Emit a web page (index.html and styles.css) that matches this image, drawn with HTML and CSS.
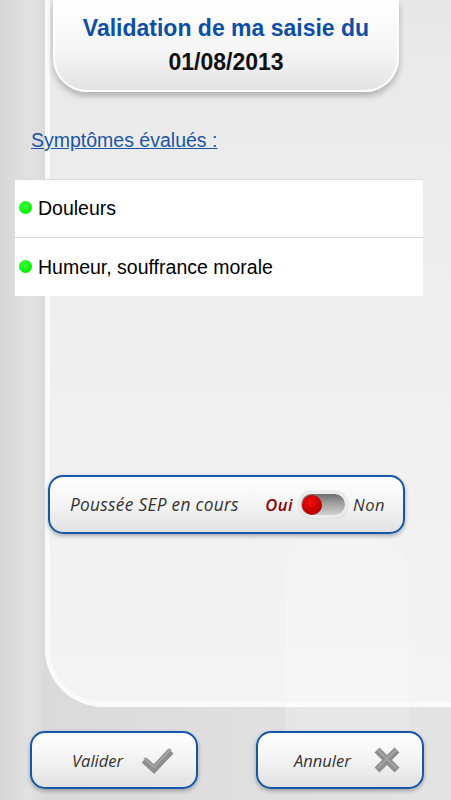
FILE: index.html
```html
<!DOCTYPE html>
<html lang="fr">
<head>
  <meta charset="UTF-8" />
  <meta name="viewport" content="width=device-width, initial-scale=1.0"/>
  <title>Validation de ma saisie</title>
  <link rel="stylesheet" href="styles.css">
</head>
<body>
  <div class="ecran">

    <!-- En-tête -->
    <div class="entete">
      <div class="titre">Validation de ma saisie du</div>
      <div class="date">01/08/2013</div>
    </div>

    <a class="lien-symptomes" href="#">Symptômes évalués :</a>

    <ul class="liste-symptomes">
      <li><span class="pastille"></span>Douleurs</li>
      <li><span class="pastille"></span>Humeur, souffrance morale</li>
    </ul>

    <!-- Poussée SEP -->
    <div class="poussee">
      <span class="poussee-label">Poussée SEP en cours</span>
      <span class="choix oui">Oui</span>
      <span class="interrupteur"><span class="bouton-rond"></span></span>
      <span class="choix">Non</span>
    </div>

    <!-- Boutons du bas -->
    <div class="actions">
      <button class="action valider">
        <span>Valider</span>
        <svg width="34" height="28" viewBox="0 0 34 28">
          <polyline points="3,14 13,23 30,5" fill="none" stroke="#8e8e8e" stroke-width="7" stroke-linejoin="miter"/>
          <polyline points="3,14 13,23 30,5" fill="none" stroke="#a4a4a4" stroke-width="2" transform="translate(0,-2)"/>
        </svg>
      </button>
      <button class="action annuler">
        <span>Annuler</span>
        <svg width="28" height="28" viewBox="0 0 28 28">
          <path d="M4,4 L24,24 M24,4 L4,24" stroke="#8e8e8e" stroke-width="7"/>
          <path d="M5,4 L23,22 M23,4 L5,22" stroke="#a4a4a4" stroke-width="2"/>
        </svg>
      </button>
    </div>

  </div>
</body>
</html>
```

FILE: styles.css
```css
body {
  margin: 0;
  font-family: 'Liberation Sans', Arial, sans-serif;
  background: #dcdcdc;
}

.ecran {
  position: relative;
  width: 451px;
  height: 800px;
  overflow: hidden;
  background:
    linear-gradient(90deg, #d6d6d6 0, #e2e2e2 30px, #dadada 45px, #e4e4e4 100%);
  display: flex;
  flex-direction: column;
}

/* grand panneau clair en fond */
.ecran::before {
  content: "";
  position: absolute;
  left: 45px;
  top: -60px;
  width: 440px;
  height: 762px;
  background: linear-gradient(180deg, #e7e7e7 0, #eeeeee 45%, #f4f4f4 100%);
  border-left: 5px solid #fafafa;
  border-bottom: 5px solid #fafafa;
  border-radius: 0 0 0 58px;
}

/* bande verticale décorative */
.ecran::after {
  content: "";
  position: absolute;
  left: 285px;
  top: 535px;
  width: 124px;
  height: 240px;
  border-radius: 40px 40px 0 0;
  background: rgba(255, 255, 255, 0.2);
}

.entete, .lien-symptomes, .liste-symptomes, .poussee, .actions {
  position: relative;
  z-index: 1;
}

.entete {
  box-sizing: border-box;
  width: 346px;
  height: 92px;
  margin-left: 53px;
  padding-top: 11px;
  text-align: center;
  font-weight: bold;
  font-size: 23px;
  line-height: 34px;
  background: linear-gradient(180deg, #ffffff 0, #f6f6f6 55%, #e3e3e3 100%);
  border: 2px solid #ffffff;
  border-top: none;
  border-radius: 0 0 34px 34px;
  box-shadow: 0 4px 6px rgba(0, 0, 0, 0.25);
}

.titre {
  color: #0d4ea6;
}

.date {
  color: #111;
}

.lien-symptomes {
  margin: 37px 0 0 31px;
  align-self: flex-start;
  font-size: 19.5px;
  line-height: 22px;
  color: #1a55a8;
  text-decoration: underline;
}

.liste-symptomes {
  list-style: none;
  margin: 28px 0 0 15px;
  padding: 0;
  width: 408px;
  background: #ffffff;
  border-top: 1px solid #dcdcdc;
}

.liste-symptomes li {
  display: flex;
  align-items: center;
  height: 57px;
  padding-left: 4px;
  font-size: 19.5px;
  color: #000;
  border-bottom: 1px solid #d6d6d6;
}

.liste-symptomes li:last-child {
  border-bottom: none;
  height: 58px;
}

.pastille {
  width: 13px;
  height: 13px;
  margin-right: 6px;
  margin-top: -2px;
  border-radius: 50%;
  background: radial-gradient(circle at 40% 35%, #3cff3c, #00f000 70%);
}

.poussee {
  box-sizing: border-box;
  width: 357px;
  height: 59px;
  margin: 179px 0 0 48px;
  padding: 0 18px 0 20px;
  display: flex;
  align-items: center;
  font-family: 'Open Sans', sans-serif;
  font-style: italic;
  font-size: 16.5px;
  color: #333;
  background: linear-gradient(180deg, #ffffff 0, #f4f4f4 50%, #e2e2e2 100%);
  border: 2px solid #1556a9;
  border-radius: 15px;
  box-shadow: 0 2px 4px rgba(0, 0, 0, 0.3);
}

.poussee-label {
  flex: 1;
  font-size: 17.3px;
  letter-spacing: 0.3px;
}

.choix {
  letter-spacing: 0.5px;
}

.oui {
  color: #8b0000;
  font-weight: 600;
}

.interrupteur {
  box-sizing: border-box;
  width: 50px;
  height: 27px;
  margin: 0 5px;
  padding: 1px;
  display: flex;
  align-items: center;
  border-radius: 14px;
  background: linear-gradient(180deg, #707070 0, #a0a0a0 45%, #cfcfcf 100%);
  border: 3px solid #ececec;
  box-shadow: 0 0 1px rgba(0, 0, 0, 0.35);
}

.bouton-rond {
  width: 20px;
  height: 20px;
  border-radius: 50%;
  background: radial-gradient(circle at 40% 35%, #f01010, #c00000 60%, #8a0000 100%);
}

.actions {
  margin-top: 197px;
  padding-left: 30px;
  display: flex;
  gap: 58px;
}

.action {
  box-sizing: border-box;
  width: 168px;
  height: 58px;
  padding: 0 0 0 40px;
  display: flex;
  align-items: center;
  gap: 18px;
  font-family: 'Open Sans', sans-serif;
  font-style: italic;
  font-size: 16.5px;
  color: #333;
  background: linear-gradient(180deg, #ffffff 0, #f3f3f3 50%, #e1e1e1 100%);
  border: 2px solid #1556a9;
  border-radius: 15px;
  box-shadow: 0 2px 4px rgba(0, 0, 0, 0.3);
  cursor: pointer;
}

.annuler {
  padding-left: 36px;
  gap: 22px;
}
```
